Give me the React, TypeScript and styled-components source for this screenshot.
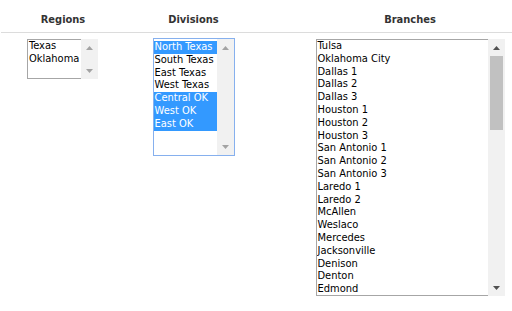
import React from "react";
import styled, { createGlobalStyle } from "styled-components";

const Global = createGlobalStyle`
  html, body { margin: 0; padding: 0; background: #fff; }
  body { font-family: "DejaVu Sans Condensed", "DejaVu Sans", sans-serif; font-size: 11px; color: #000; }
`;

const Table = styled.div`
  display: grid;
  grid-template-columns: 125px 137px 250px;
  width: 512px;
`;

const HeadCell = styled.div<{ $pad?: number }>`
  box-sizing: border-box;
  height: 33px;
  padding: 13px 0 0 ${(p) => p.$pad ?? 0}px;
  border-bottom: 1px solid #dcdcdc;
  text-align: center;
  font-weight: bold;
  color: #333;
  line-height: 13px;
  font-size: 11px;
`;

const FirstHead = styled(HeadCell)`
  margin-left: 1px;
`;

const BodyCell = styled.div<{ $pad?: number }>`
  display: flex;
  justify-content: center;
  align-items: flex-start;
  padding: 6px 0 0 ${(p) => p.$pad ?? 0}px;
`;

const Box = styled.div<{ $w: number; $h: number; $focused?: boolean }>`
  box-sizing: border-box;
  display: flex;
  width: ${(p) => p.$w}px;
  height: ${(p) => p.$h}px;
  margin-top: ${(p) => (p.$focused ? -1 : 0)}px;
  border: ${(p) => (p.$focused ? "1px solid #86b0ee" : "none")};
  background: #fff;
`;

const Options = styled.div<{ $focused?: boolean }>`
  box-sizing: border-box;
  flex: 1;
  overflow: hidden;
  border: ${(p) => (p.$focused ? "none" : "1px solid #a6a6a6")};
  border-right: none;
  padding-top: ${(p) => (p.$focused ? 2 : 0)}px;
`;

const Option = styled.div<{ $selected?: boolean }>`
  height: 12.8px;
  line-height: 12.8px;
  padding: 0 1px;
  white-space: nowrap;
  font-size: 11px;
  background: ${(p) => (p.$selected ? "#3399ff" : "transparent")};
  color: ${(p) => (p.$selected ? "#fff" : "#000")};
`;

const Scrollbar = styled.div`
  width: 17px;
  flex: none;
  display: flex;
  flex-direction: column;
  background: #f1f1f1;
`;

const Arrow = styled.div`
  height: 17px;
  flex: none;
  display: flex;
  align-items: center;
  justify-content: center;
`;

const Track = styled.div`
  flex: 1;
  display: flex;
  flex-direction: column;
  align-items: center;
`;

const Thumb = styled.div<{ $h: number }>`
  width: 13px;
  height: ${(p) => p.$h}px;
  background: #c1c1c1;
`;

function Tri({ dir, active }: { dir: "up" | "down"; active?: boolean }) {
  const fill = active ? "#505050" : "#a3a3a3";
  return (
    <svg width="7" height="4" viewBox="0 0 7 4">
      {dir === "up" ? (
        <polygon points="0,4 7,4 3.5,0" fill={fill} />
      ) : (
        <polygon points="0,0 7,0 3.5,4" fill={fill} />
      )}
    </svg>
  );
}

function ListBox({
  items,
  selected = [],
  w,
  h,
  focused,
  thumb,
}: {
  items: string[];
  selected?: number[];
  w: number;
  h: number;
  focused?: boolean;
  thumb?: number;
}) {
  return (
    <Box $w={w} $h={h} $focused={focused}>
      <Options $focused={focused}>
        {items.map((it, i) => (
          <Option key={it} $selected={selected.includes(i)}>
            {it}
          </Option>
        ))}
      </Options>
      <Scrollbar>
        <Arrow>
          <Tri dir="up" active={!!thumb} />
        </Arrow>
        <Track>{thumb ? <Thumb $h={thumb} /> : null}</Track>
        <Arrow>
          <Tri dir="down" active={!!thumb} />
        </Arrow>
      </Scrollbar>
    </Box>
  );
}

const regions = ["Texas", "Oklahoma"];
const divisions = [
  "North Texas",
  "South Texas",
  "East Texas",
  "West Texas",
  "Central OK",
  "West OK",
  "East OK",
];
const branches = [
  "Tulsa",
  "Oklahoma City",
  "Dallas 1",
  "Dallas 2",
  "Dallas 3",
  "Houston 1",
  "Houston 2",
  "Houston 3",
  "San Antonio 1",
  "San Antonio 2",
  "San Antonio 3",
  "Laredo 1",
  "Laredo 2",
  "McAllen",
  "Weslaco",
  "Mercedes",
  "Jacksonville",
  "Denison",
  "Denton",
  "Edmond",
];

export default function App() {
  return (
    <>
      <Global />
      <Table>
        <FirstHead>Regions</FirstHead>
        <HeadCell>Divisions</HeadCell>
        <HeadCell $pad={46}>Branches</HeadCell>
        <BodyCell>
          <ListBox items={regions} w={71} h={40} />
        </BodyCell>
        <BodyCell>
          <ListBox items={divisions} selected={[0, 4, 5, 6]} w={82} h={118} focused />
        </BodyCell>
        <BodyCell $pad={46}>
          <ListBox items={branches} w={189} h={257} thumb={74} />
        </BodyCell>
      </Table>
    </>
  );
}
